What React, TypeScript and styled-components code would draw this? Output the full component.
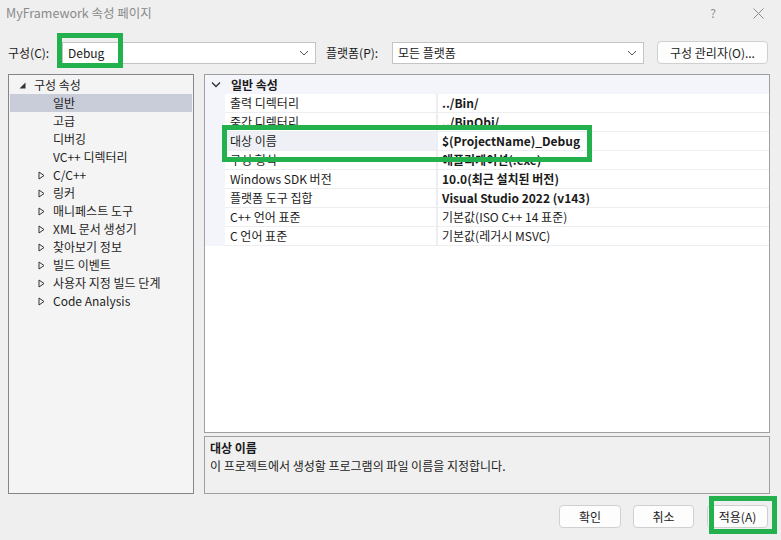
import React from "react";
import styled, { createGlobalStyle } from "styled-components";

const Global = createGlobalStyle`
  html, body { margin: 0; padding: 0; background: #efefef; }
  body { font-family: "Noto Sans CJK KR", "Noto Sans", sans-serif; font-size: 12px; color: #1a1a1a; }
  * { box-sizing: border-box; }
`;

const Window = styled.div`
  position: relative;
  width: 781px;
  height: 540px;
  background: #efefef;
  display: flex;
  flex-direction: column;
  overflow: hidden;
`;

const TitleBar = styled.div`
  height: 28px;
  display: flex;
  align-items: center;
  padding: 0 11px 2px 6px;
`;

const Title = styled.div`
  flex: 1;
  color: #8a8a8a;
  font-size: 12.5px;
  line-height: 16px;
`;

const TitleIcon = styled.div<{ $w: number; $ml?: number }>`
  width: ${(p) => p.$w}px;
  margin-left: ${(p) => p.$ml ?? 0}px;
  display: flex;
  justify-content: center;
  color: #8f8f8f;
  font-size: 12px;
  line-height: 14px;
`;

const ConfigBar = styled.div`
  height: 46px;
  padding-top: 3px;
  display: flex;
  align-items: center;
  padding-left: 8px;
`;

const Label = styled.div<{ $w: number; $ml?: number }>`
  width: ${(p) => p.$w}px;
  margin-left: ${(p) => p.$ml ?? 0}px;
  font-size: 12px;
  line-height: 16px;
  color: #1a1a1a;
`;

const Combo = styled.div<{ $w: number }>`
  width: ${(p) => p.$w}px;
  height: 22px;
  background: #ffffff;
  border: 1px solid #c4c4c4;
  display: flex;
  align-items: center;
  padding: 0 6px 0 5px;
  font-size: 12px;
  line-height: 16px;
`;

const ComboText = styled.span`
  flex: 1;
`;

const Button = styled.div<{ $w: number; $ml?: number }>`
  width: ${(p) => p.$w}px;
  height: 23px;
  margin-left: ${(p) => p.$ml ?? 0}px;
  background: #fdfdfd;
  border: 1px solid #d0d0d0;
  border-radius: 4px;
  display: flex;
  align-items: center;
  justify-content: center;
  font-size: 12px;
  line-height: 16px;
  color: #1a1a1a;
`;

const Main = styled.div`
  height: 420px;
  display: flex;
  padding-left: 8px;
  gap: 10px;
`;

const TreePanel = styled.div`
  width: 186px;
  height: 420px;
  background: #f4f4f4;
  border: 1px solid #84868c;
  padding: 1px 1px 0 1px;
  display: flex;
  flex-direction: column;
`;

const TreeRow = styled.div<{ $indent: number; $sel?: boolean }>`
  height: 18px;
  display: flex;
  align-items: center;
  padding-left: ${(p) => p.$indent}px;
  background: ${(p) => (p.$sel ? "#c9ccd9" : "transparent")};
  font-size: 12px;
  line-height: 16px;
  color: #1e1e1e;
`;

const Expander = styled.span`
  width: 15px;
  display: inline-flex;
  align-items: center;
`;

const RightCol = styled.div`
  width: 566px;
  display: flex;
  flex-direction: column;
  gap: 3px;
`;

const Grid = styled.div`
  flex: 1;
  background: #ffffff;
  border: 1px solid #a0a0a0;
  display: flex;
  flex-direction: column;
`;

const CategoryRow = styled.div`
  height: 19px;
  background: #f3f5fa;
  display: flex;
  align-items: center;
  padding-left: 6px;
  font-weight: 700;
  font-size: 12px;
  line-height: 16px;
`;

const CatChevron = styled.span`
  width: 20px;
  display: inline-flex;
  align-items: center;
`;

const PropRow = styled.div`
  height: 19px;
  display: grid;
  grid-template-columns: 20px 213px 1fr;
`;

const Gutter = styled.div`
  background: #f3f5fa;
`;

const NameCell = styled.div<{ $sel?: boolean }>`
  border-bottom: 1px solid #eceef2;
  border-right: 2px solid #eceef2;
  background: ${(p) => (p.$sel ? "#eef0f5" : "#ffffff")};
  padding-left: 5px;
  display: flex;
  align-items: center;
  font-size: 12px;
  line-height: 16px;
  white-space: nowrap;
  overflow: hidden;
`;

const ValueCell = styled.div<{ $bold?: boolean }>`
  border-bottom: 1px solid #eceef2;
  padding-left: 4px;
  display: flex;
  align-items: center;
  font-size: 12px;
  line-height: 16px;
  font-weight: ${(p) => (p.$bold ? 700 : 400)};
  white-space: nowrap;
  overflow: hidden;
`;

const DescPanel = styled.div`
  height: 58px;
  background: #f0f0f0;
  border: 1px solid #a0a0a0;
  padding: 2px 5px;
  display: flex;
  flex-direction: column;
`;

const DescTitle = styled.div`
  font-weight: 700;
  font-size: 12px;
  line-height: 18px;
`;

const DescText = styled.div`
  font-size: 12px;
  line-height: 18px;
`;

const Footer = styled.div`
  flex: 1;
  display: flex;
  justify-content: flex-end;
  align-items: flex-start;
  padding: 11px 13px 0 0;
`;

const Highlight = styled.div<{ $x: number; $y: number; $w: number; $h: number }>`
  position: absolute;
  left: ${(p) => p.$x}px;
  top: ${(p) => p.$y}px;
  width: ${(p) => p.$w}px;
  height: ${(p) => p.$h}px;
  border: 5px solid #22b14c;
  pointer-events: none;
`;

const Chevron = () => (
  <svg width="10" height="6" viewBox="0 0 10 6">
    <path d="M1 1 L5 5 L9 1" fill="none" stroke="#555" strokeWidth="1" />
  </svg>
);

const OpenTri = () => (
  <svg width="7" height="9" viewBox="0 0 7 9">
    <path d="M1 1 L6 4.5 L1 8 Z" fill="none" stroke="#333" strokeWidth="1" />
  </svg>
);

const FilledTri = () => (
  <svg width="7" height="7" viewBox="0 0 7 7">
    <path d="M6.5 0.5 L6.5 6.5 L0.5 6.5 Z" fill="#333" />
  </svg>
);

const CatChev = () => (
  <svg width="10" height="7" viewBox="0 0 10 7">
    <path d="M1 1.5 L5 5.5 L9 1.5" fill="none" stroke="#333" strokeWidth="1.4" />
  </svg>
);

const children = ["일반", "고급", "디버깅", "VC++ 디렉터리"];
const groups = [
  "C/C++",
  "링커",
  "매니페스트 도구",
  "XML 문서 생성기",
  "찾아보기 정보",
  "빌드 이벤트",
  "사용자 지정 빌드 단계",
  "Code Analysis",
];

const props: { name: string; value: string; bold: boolean; sel?: boolean }[] = [
  { name: "출력 디렉터리", value: "../Bin/", bold: true },
  { name: "중간 디렉터리", value: "../BinObj/", bold: true },
  { name: "대상 이름", value: "$(ProjectName)_Debug", bold: true, sel: true },
  { name: "구성 형식", value: "애플리케이션(.exe)", bold: true },
  { name: "Windows SDK 버전", value: "10.0(최근 설치된 버전)", bold: true },
  { name: "플랫폼 도구 집합", value: "Visual Studio 2022 (v143)", bold: true },
  { name: "C++ 언어 표준", value: "기본값(ISO C++ 14 표준)", bold: false },
  { name: "C 언어 표준", value: "기본값(레거시 MSVC)", bold: false },
];

export default function App() {
  return (
    <>
      <Global />
      <Window>
        <TitleBar>
          <Title>MyFramework 속성 페이지</Title>
          <TitleIcon $w={20}>?</TitleIcon>
          <TitleIcon $w={24} $ml={23}>
            <svg width="11" height="11" viewBox="0 0 11 11">
              <path d="M0.5 0.5 L10.5 10.5 M10.5 0.5 L0.5 10.5" stroke="#8a8a8a" strokeWidth="1" />
            </svg>
          </TitleIcon>
        </TitleBar>
        <ConfigBar>
          <Label $w={54}>구성(C):</Label>
          <Combo $w={254}>
            <ComboText>Debug</ComboText>
            <Chevron />
          </Combo>
          <Label $w={66} $ml={10}>플랫폼(P):</Label>
          <Combo $w={252}>
            <ComboText>모든 플랫폼</ComboText>
            <Chevron />
          </Combo>
          <Button $w={111} $ml={13}>구성 관리자(O)...</Button>
        </ConfigBar>
        <Main>
          <TreePanel>
            <TreeRow $indent={9}>
              <Expander>
                <FilledTri />
              </Expander>
              구성 속성
            </TreeRow>
            {children.map((c, i) => (
              <TreeRow key={c} $indent={43} $sel={i === 0}>
                {c}
              </TreeRow>
            ))}
            {groups.map((g) => (
              <TreeRow key={g} $indent={28}>
                <Expander>
                  <OpenTri />
                </Expander>
                {g}
              </TreeRow>
            ))}
          </TreePanel>
          <RightCol>
            <Grid>
              <CategoryRow>
                <CatChevron>
                  <CatChev />
                </CatChevron>
                일반 속성
              </CategoryRow>
              {props.map((p) => (
                <PropRow key={p.name}>
                  <Gutter />
                  <NameCell $sel={p.sel}>{p.name}</NameCell>
                  <ValueCell $bold={p.bold}>{p.value}</ValueCell>
                </PropRow>
              ))}
            </Grid>
            <DescPanel>
              <DescTitle>대상 이름</DescTitle>
              <DescText>이 프로젝트에서 생성할 프로그램의 파일 이름을 지정합니다.</DescText>
            </DescPanel>
          </RightCol>
        </Main>
        <Footer>
          <Button $w={62}>확인</Button>
          <Button $w={61} $ml={12}>취소</Button>
          <Button $w={61} $ml={13}>적용(A)</Button>
        </Footer>
        <Highlight $x={57} $y={33} $w={66} $h={35} />
        <Highlight $x={222} $y={125} $w={370} $h={37} />
        <Highlight $x={709} $y={496} $w={68} $h={38} />
      </Window>
    </>
  );
}
